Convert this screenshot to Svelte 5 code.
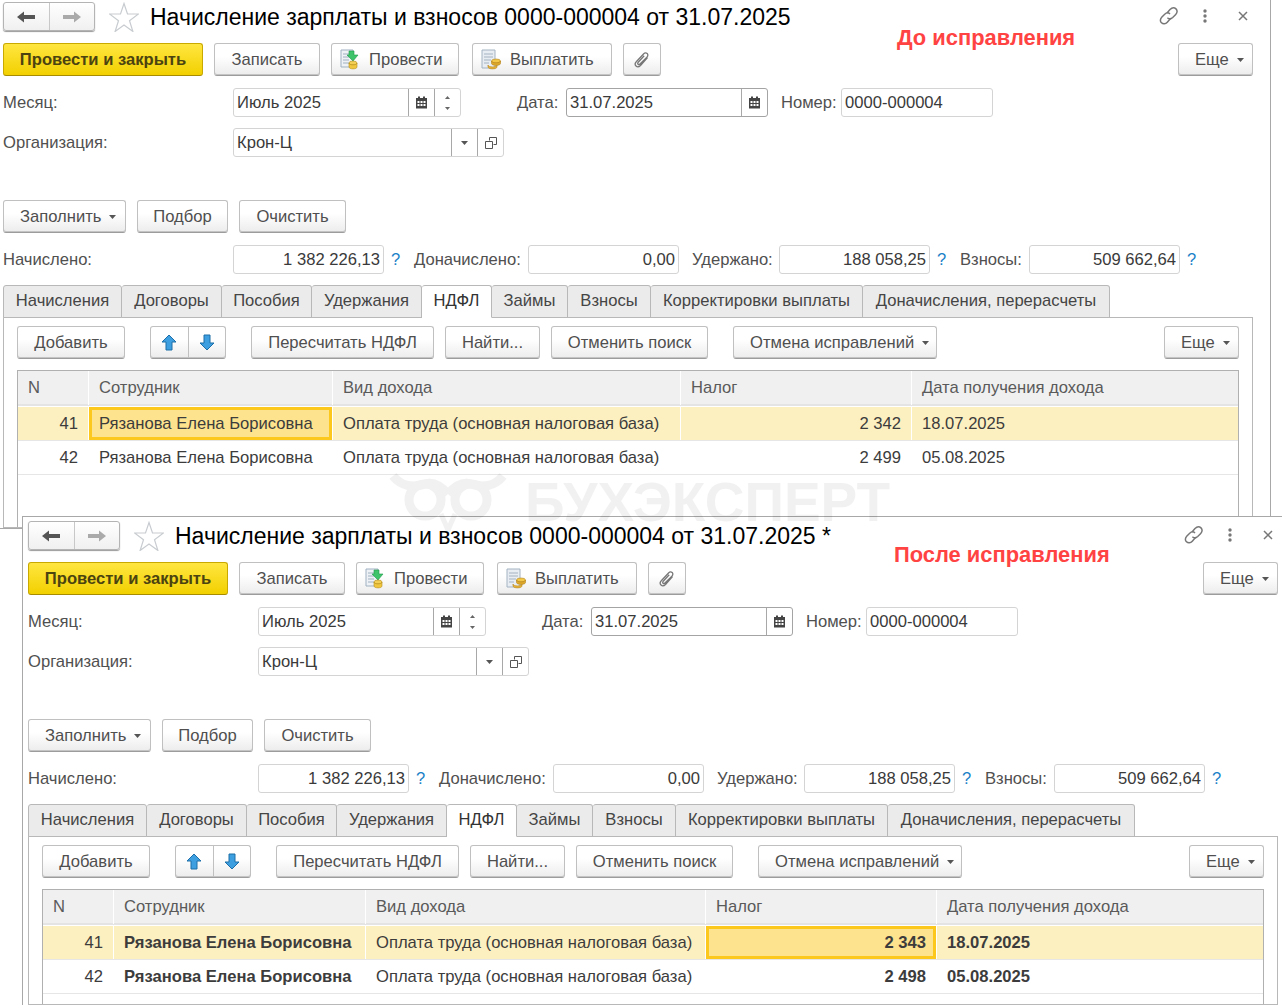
<script>
  const first = {
    cls: 'first', title: 'Начисление зарплаты и взносов 0000-000004 от 31.07.2025',
    cols: '70px 1px 243px 1px 347px 1px 230px 1px 1fr', bold: false,
    rows: [
      { n: '41', who: 'Рязанова Елена Борисовна', tax: '2 342', date: '18.07.2025', sel: true, cur: 'who' },
      { n: '42', who: 'Рязанова Елена Борисовна', tax: '2 499', date: '05.08.2025' }
    ]
  };
  const second = {
    cls: 'second', title: 'Начисление зарплаты и взносов 0000-000004 от 31.07.2025 *',
    cols: '70px 1px 251px 1px 339px 1px 230px 1px 1fr', bold: true,
    rows: [
      { n: '41', who: 'Рязанова Елена Борисовна', tax: '2 343', date: '18.07.2025', sel: true, cur: 'tax' },
      { n: '42', who: 'Рязанова Елена Борисовна', tax: '2 498', date: '05.08.2025' }
    ]
  };
  const tabs = [
    { t: 'Начисления', w: 'tw119' }, { t: 'Договоры', w: 'tw100' }, { t: 'Пособия', w: 'tw90' },
    { t: 'Удержания', w: 'tw110' }, { t: 'НДФЛ', w: 'tw70' }, { t: 'Займы', w: 'tw76' },
    { t: 'Взносы', w: 'tw83' }, { t: 'Корректировки выплаты', w: 'tw212' }, { t: 'Доначисления, перерасчеты', w: 'tw247' }
  ];
</script>

{#snippet caret()}
  <svg class="caret" width="7" height="4" viewBox="0 0 7 4"><path d="M0 0h7L3.5 4z" fill="#555"/></svg>
{/snippet}

{#snippet calendar()}
  <svg width="13" height="13" viewBox="0 0 13 13"><path d="M1 2h2V.5h2V2h3V.5h2V2h2v10.5H1z" fill="#444"/><path d="M2.5 5h2v2h-2zM5.5 5h2v2h-2zM8.5 5h2v2h-2zM2.5 8h2v2h-2zM5.5 8h2v2h-2zM8.5 8h2v2h-2z" fill="#fff"/></svg>
{/snippet}

{#snippet form(d)}
  <section class="win {d.cls}">
    <div class="titlebar">
      <div class="nav">
        <span class="navcell"><svg width="18" height="12" viewBox="0 0 18 12"><path d="M0 6l7-5.500V4h11v4H7v3.500z" fill="#555"/></svg></span>
        <span class="navcell"><svg width="18" height="12" viewBox="0 0 18 12"><path d="M18 6l-7-5.500V4H0v4h11v3.500z" fill="#aaa"/></svg></span>
      </div>
      <svg class="star" width="30" height="30" viewBox="0 0 30 30"><path d="M15 1.500l3.500 10.500h11l-9 6.800 3.400 10.700-8.900-6.600-8.900 6.600 3.400-10.700-9-6.800h11z" fill="#fff" stroke="#c8ccd0" stroke-width="1.200"/></svg>
      <h1>{d.title}</h1>
      <div class="winicons">
        <svg width="22" height="20" viewBox="0 0 22 20" fill="none" stroke="#777" stroke-width="1.500"><path d="M9 7l3-3.500c2-2 4.500-2 6-.6s1.500 3.800-.3 5.600l-3 3c-1.800 1.700-4 1.500-5.300.2"/><path d="M12.500 12.500l-3.200 3.700c-1.800 2-4.300 2-5.800.6s-1.500-3.800.2-5.600l3-3c1.800-1.700 4-1.500 5.300-.2"/></svg>
        <svg width="6" height="14" viewBox="0 0 6 14"><circle cx="3" cy="2" r="1.700" fill="#777"/><circle cx="3" cy="7" r="1.700" fill="#777"/><circle cx="3" cy="12" r="1.700" fill="#777"/></svg>
        <svg class="closex" width="10" height="10" viewBox="0 0 10 10"><path d="M1 1l8 8M9 1l-8 8" stroke="#777" stroke-width="1.500"/></svg>
      </div>
    </div>

    <div class="bar top">
      <button class="btn primary">Провести и закрыть</button>
      <button class="btn w106">Записать</button>
      <button class="btn icon w128">
        <svg width="21" height="21" viewBox="0 0 21 21"><path d="M1 1h12v17H1z" fill="#eef2f6" stroke="#9fb0c0"/><path d="M3 5h8M3 8h6M3 11h6M3 14h6" stroke="#9fb0c0"/><path d="M9 2h5v4h4l-5 6-6-6h2z" fill="#3fc46b" stroke="#1f9a4a" stroke-width=".6"/><ellipse cx="13" cy="14" rx="4" ry="2" fill="#f3cf55" stroke="#b58f1c" stroke-width=".6"/><path d="M9 14v4c0 2.500 8 2.500 8 0v-4c0 2.500-8 2.500-8 0z" fill="#f0c63f" stroke="#b58f1c" stroke-width=".6"/></svg>
        Провести
      </button>
      <button class="btn icon pay w140">
        <svg width="21" height="21" viewBox="0 0 21 21"><path d="M1 1h13v18H1z" fill="#e8edf3" stroke="#a3b2c2"/><path d="M3 5h9M3 8h9M3 11h7M3 14h5" stroke="#a3b2c2"/><ellipse cx="15" cy="12" rx="4.500" ry="2" fill="#f3c848" stroke="#b5851c" stroke-width=".6"/><path d="M10.500 12v2.500c0 2.500 9 2.500 9 0V12c0 2.500-9 2.500-9 0z" fill="#e0a92c" stroke="#b5851c" stroke-width=".6"/><path d="M7 16v2c0 2.500 9 2.500 9 0v-2c0 2.500-9 2.500-9 0z" fill="#e8b436" stroke="#b5851c" stroke-width=".6"/></svg>
        Выплатить
      </button>
      <button class="btn clip" aria-label="Вложение">
        <svg width="18" height="18" viewBox="0 0 18 18" fill="none" stroke="#777" stroke-width="1.300"><path d="M14.500 6.500L7.500 14.500c-1.500 1.500-3.500 1.500-4.500.5s-1-3 .5-4.500L10.500 3c1.200-1.200 2.800-1.200 3.700-.4s.9 2.300-.3 3.500L7 13c-.6.600-1.500.7-2 .2s-.4-1.300.2-2l6-6.500"/></svg>
      </button>
      <button class="btn more">Еще {@render caret()}</button>
    </div>

    <div class="fieldrow">
      <span class="lab main">Месяц:</span>
      <div class="input month"><span class="val">Июль 2025</span><span class="seg">{@render calendar()}</span><span class="seg spin"><svg width="5" height="3" viewBox="0 0 5 3"><path d="M0 3h5L2.500 0z" fill="#666"/></svg><svg width="5" height="3" viewBox="0 0 5 3"><path d="M0 0h5L2.500 3z" fill="#666"/></svg></span></div>
      <span class="lab datelab">Дата:</span>
      <div class="input date"><span class="val">31.07.2025</span><span class="seg">{@render calendar()}</span></div>
      <span class="lab numlab">Номер:</span>
      <div class="input number"><span class="val">0000-000004</span></div>
    </div>

    <div class="fieldrow org">
      <span class="lab main">Организация:</span>
      <div class="input orgf"><span class="val">Крон-Ц</span><span class="seg"><svg width="7" height="4" viewBox="0 0 7 4"><path d="M0 0h7L3.500 4z" fill="#555"/></svg></span><span class="seg"><svg width="12" height="12" viewBox="0 0 12 12" fill="none" stroke="#555"><path d="M4.500 3.500v-3h7v7h-3"/><path d="M.5 4.500h7v7h-7z"/></svg></span></div>
    </div>

    <div class="bar fill">
      <button class="btn dd w123">Заполнить {@render caret()}</button>
      <button class="btn w91">Подбор</button>
      <button class="btn w107">Очистить</button>
    </div>

    <div class="fieldrow totals">
      <span class="lab main">Начислено:</span>
      <div class="input sum">1 382 226,13</div><span class="q">?</span>
      <span class="lab l2">Доначислено:</span>
      <div class="input sum">0,00</div>
      <span class="lab l3">Удержано:</span>
      <div class="input sum">188 058,25</div><span class="q">?</span>
      <span class="lab l4">Взносы:</span>
      <div class="input sum">509 662,64</div><span class="q">?</span>
    </div>

    <div class="tabs">
      {#each tabs as t}
        <div class="tab {t.w}" class:active={t.t === 'НДФЛ'}>{t.t}</div>
      {/each}
    </div>

    <div class="page">
      <div class="bar inner">
        <button class="btn w108">Добавить</button>
        <div class="updown">
          <span><svg width="16" height="17" viewBox="0 0 16 17"><path d="M8 1l7 7h-4v8H5V8H1z" fill="#3d9fe0" stroke="#1c6fa8"/></svg></span>
          <span><svg width="16" height="17" viewBox="0 0 16 17"><path d="M8 16l7-7h-4V1H5v8H1z" fill="#3d9fe0" stroke="#1c6fa8"/></svg></span>
        </div>
        <button class="btn w183">Пересчитать НДФЛ</button>
        <button class="btn tight w95">Найти...</button>
        <button class="btn tight w157">Отменить поиск</button>
        <button class="btn dd w204">Отмена исправлений {@render caret()}</button>
        <button class="btn more">Еще {@render caret()}</button>
      </div>

      <div class="table" class:bold={d.bold}>
        <div class="row head" style="grid-template-columns:{d.cols}">
          <div>N</div><i></i><div>Сотрудник</div><i></i><div>Вид дохода</div><i></i><div>Налог</div><i></i><div>Дата получения дохода</div>
        </div>
        {#each d.rows as r}
          <div class="row body" class:sel={r.sel} style="grid-template-columns:{d.cols}">
            <div class="num">{r.n}</div><i></i>
            <div class="strong" class:cur={r.cur === 'who'}>{r.who}</div><i></i>
            <div>Оплата труда (основная налоговая база)</div><i></i>
            <div class="num strong" class:cur={r.cur === 'tax'}>{r.tax}</div><i></i>
            <div class="strong">{r.date}</div>
          </div>
        {/each}
      </div>
    </div>
  </section>
{/snippet}

<main class="desk">
  {@render form(first)}
  {@render form(second)}
  <div class="note n1">До исправления</div>
  <div class="note n2">После исправления</div>
  <div class="mark">
    <svg width="122" height="72" viewBox="0 0 122 72" fill="none" stroke="#000" stroke-width="9"><circle cx="36" cy="38" r="16"/><circle cx="82" cy="38" r="16"/><path d="M4 14c8 10 20 12 32 8 9-3 16 2 23 10M114 14c-8 10-20 12-32 8-9-3-16 2-23 10"/><path d="M52 52l7 16 7-16" stroke-width="5"/></svg>
    <span>БУХЭКСПЕРТ</span>
  </div>
</main>

<style>
  :global(body) { margin: 0; background: #fff; }
  .desk { position: relative; width: 1282px; height: 1005px; overflow: hidden; font: 16.6px "Liberation Sans", Arial, sans-serif; color: #4a4a4a; }
  .win { position: absolute; display: flex; flex-direction: column; background: #fff; box-sizing: border-box; overflow: hidden; }
  .first { left: 0; top: 0; width: 1271px; height: 529px; padding: 2px 0 0 3px; border-right: 1px solid #a8a8a8; border-bottom: 1px solid #a8a8a8; }
  .second { left: 22px; top: 516px; width: 1260px; height: 489px; padding: 4px 0 0 5px; border-left: 1px solid #a8a8a8; border-top: 1px solid #a8a8a8; }

  .titlebar { display: flex; align-items: center; height: 30px; margin-bottom: 11px; width: 1250px; }
  .nav { display: flex; box-sizing: border-box; width: 92px; height: 29px; margin-bottom: 1px; border: 1px solid #b4b4b4; border-radius: 3px; background: linear-gradient(#fff, #f0f0f0); box-shadow: 0 1px 1px #999; }
  .navcell { flex: 1; display: flex; align-items: center; justify-content: center; }
  .navcell + .navcell { border-left: 1px solid #c8c8c8; }
  .star { margin-left: 14px; flex: none; }
  h1 { margin: 0 0 0 11px; font-size: 23px; font-weight: 400; color: #000; white-space: nowrap; flex: 1; }
  .winicons { display: flex; align-items: center; gap: 22px; padding-right: 5px; margin-top: -2px; }
  .closex { margin-left: 8px; }

  .bar { display: flex; align-items: flex-start; height: 33px; gap: 11px; }
  .top { margin-bottom: 12px; width: 1250px; }
  .fill { margin-bottom: 12px; }
  .btn { height: 33px; box-sizing: border-box; display: inline-flex; align-items: center; justify-content: center; gap: 8px; padding: 0 4px; font: inherit; color: #4f4f4f; white-space: nowrap; border: 1px solid #c0c0c0; border-bottom-color: #9c9c9c; border-radius: 3px; background: linear-gradient(#fff 40%, #ececec); box-shadow: inset 0 -1px 0 #c4c4c4; }
  .primary { font-weight: 700; background: linear-gradient(#ffe640, #f2d000); border-color: #c9a800; border-bottom-color: #a88c00; box-shadow: none; color: #4b4310; width: 200px; padding: 0; }
  .icon { padding: 0 0 0 8px; justify-content: flex-start; }
  .pay { margin-left: 2px; }
  .clip { width: 38px; padding: 0; }
  .more { margin-left: auto; width: 75px; padding: 0 0 0 16px; justify-content: flex-start; }
  .dd { padding: 0 0 0 16px; justify-content: flex-start; }
  .w91 { width: 91px; } .w95 { width: 95px; } .w106 { width: 106px; } .w107 { width: 107px; } .w108 { width: 108px; }
  .w123 { width: 123px; } .w128 { width: 128px; } .w140 { width: 140px; } .w157 { width: 157px; } .w183 { width: 183px; } .w204 { width: 204px; }

  .fieldrow { display: flex; align-items: center; height: 29px; margin-bottom: 11px; }
  .org { margin-bottom: 43px; }
  .lab { white-space: nowrap; color: #505050; }
  .main { width: 230px; flex: none; }
  .input { box-sizing: border-box; height: 29px; display: flex; align-items: stretch; border: 1px solid #d4d4d4; border-radius: 3px; color: #3a3a3a; background: #fff; flex: none; }
  .val { flex: 1; padding-left: 3px; line-height: 27px; }
  .seg { width: 25px; border-left: 1px solid #a8a8a8; display: flex; align-items: center; justify-content: center; }
  .spin { flex-direction: column; gap: 8px; }
  .month { width: 228px; }
  .datelab { margin-left: 56px; width: 49px; }
  .date { width: 202px; border-color: #a4a4a4; }
  .numlab { margin-left: 13px; width: 60px; }
  .number { width: 152px; }
  .orgf { width: 271px; }
  .sum { width: 151px; justify-content: flex-end; padding-right: 3px; line-height: 27px; }
  .q { width: 10px; margin: 0 13px 0 7px; color: #1b82c8; flex: none; }
  .l2 { width: 114px; flex: none; }
  .l3 { width: 87px; flex: none; margin-left: 13px; }
  .l4 { width: 69px; flex: none; }

  .tabs { display: flex; height: 33px; position: relative; z-index: 1; }
  .tab { box-sizing: border-box; height: 33px; line-height: 30px; text-align: center; background: #ebebeb; border: 1px solid #b8b8b8; border-left-width: 0; border-radius: 3px 3px 0 0; color: #454545; white-space: nowrap; }
  .tab:first-child { border-left-width: 1px; }
  .tab.active { background: #fff; border-bottom-color: #fff; color: #333; }
  .tw70 { width: 70px; } .tw76 { width: 76px; } .tw83 { width: 83px; } .tw90 { width: 90px; } .tw100 { width: 100px; }
  .tw110 { width: 110px; } .tw119 { width: 119px; } .tw212 { width: 212px; } .tw247 { width: 247px; }

  .page { box-sizing: border-box; width: 1250px; margin-top: -1px; flex: 1; min-height: 0; padding: 8px 13px 0 13px; border: 1px solid #b8b8b8; display: flex; flex-direction: column; }
  .inner { margin-bottom: 11px; gap: 25px; width: 1222px; }
  .tight { margin-left: -14px; }
  .updown { display: flex; box-sizing: border-box; width: 76px; height: 33px; border: 1px solid #c0c0c0; border-bottom-color: #9c9c9c; border-radius: 3px; background: linear-gradient(#fff 40%, #ececec); box-shadow: inset 0 -1px 0 #c4c4c4; }
  .updown span { flex: 1; display: flex; align-items: center; justify-content: center; }
  .updown span + span { border-left: 1px solid #c0c0c0; }

  .table { flex: 1; box-sizing: border-box; width: 1222px; border: 1px solid #b0b0b0; border-bottom: 0; color: #3c3c3c; }
  .row { display: grid; }
  .row i { background: #fff; }
  .row > div { padding: 0 10px; white-space: nowrap; box-sizing: border-box; }
  .head { height: 35px; line-height: 34px; background: #f0f0f0; color: #5a5a5a; border-bottom: 2px solid #e4e4e4; box-sizing: border-box; }
  .body { height: 34px; line-height: 33px; border-bottom: 1px solid #e6e6e6; box-sizing: border-box; }
  .body.sel { background: #fdf0c0; margin-top: 1px; }
  .num { text-align: right; }
  .cur { background: #fde38e; outline: 3px solid #fcc81e; outline-offset: -3px; }
  .bold .strong { font-weight: 700; }

  .note { position: absolute; font-weight: 700; font-size: 21.9px; color: #ff4343; white-space: nowrap; }
  .n1 { left: 897px; top: 25px; }
  .n2 { left: 894px; top: 542px; }

  .mark { position: absolute; left: 389px; top: 462px; display: flex; align-items: flex-start; gap: 14px; opacity: 0.05; pointer-events: none; }
  .mark span { font-weight: 700; font-size: 55px; line-height: 40px; color: #000; margin-top: 20px; }
</style>
